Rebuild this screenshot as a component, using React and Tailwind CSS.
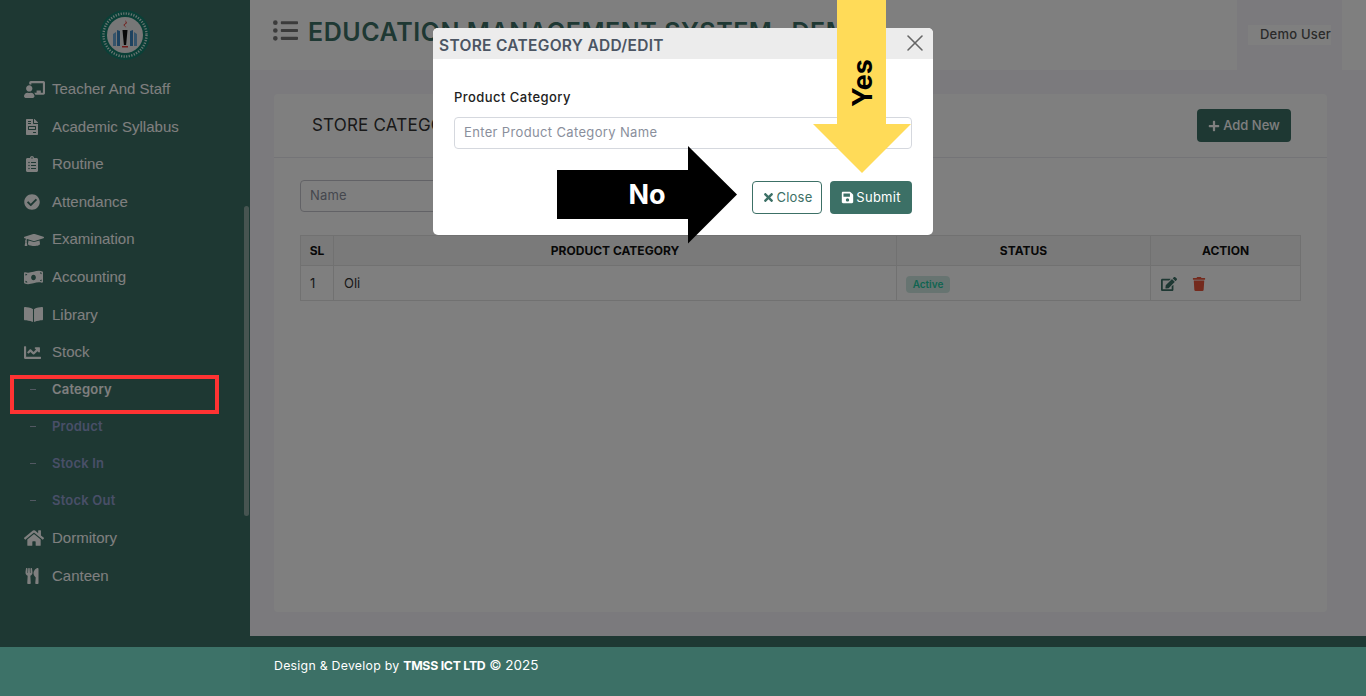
import React from 'react'
import {
  FaChalkboardTeacher,
  FaFileInvoice,
  FaClipboardList,
  FaCheckCircle,
  FaGraduationCap,
  FaMoneyBillWave,
  FaBookOpen,
  FaChartLine,
  FaHome,
  FaUtensils,
  FaEdit,
  FaTrash,
  FaListUl,
  FaSave,
  FaPlus,
  FaTimes
} from 'react-icons/fa'
import { X } from 'lucide-react'

const SANS = "font-['Inter','Liberation_Sans',sans-serif]"

const MENU_TOP = [
  { label: 'Teacher And Staff', icon: FaChalkboardTeacher, size: 21 },
  { label: 'Academic Syllabus', icon: FaFileInvoice, size: 16 },
  { label: 'Routine', icon: FaClipboardList, size: 16 },
  { label: 'Attendance', icon: FaCheckCircle, size: 16 },
  { label: 'Examination', icon: FaGraduationCap, size: 20 },
  { label: 'Accounting', icon: FaMoneyBillWave, size: 19 },
  { label: 'Library', icon: FaBookOpen, size: 19 },
  { label: 'Stock', icon: FaChartLine, size: 17 }
]

const SUB_MENU = ['Category', 'Product', 'Stock In', 'Stock Out']

const MENU_BOTTOM = [
  { label: 'Dormitory', icon: FaHome, size: 20 },
  { label: 'Canteen', icon: FaUtensils, size: 16 }
]

function Logo() {
  return (
    <svg width="50" height="50" viewBox="0 0 50 50">
      <circle cx="25" cy="25" r="25" fill="#14806f" />
      <circle cx="25" cy="25" r="21.5" fill="none" stroke="#d7ebe6" strokeWidth="2.4" strokeDasharray="1.2 1.4" />
      <circle cx="25" cy="25" r="18" fill="#efefef" />
      <path d="M13 24l3-2v14h-3z" fill="#6aa9d6" />
      <path d="M17 20l3 1v15h-3z" fill="#3c86c0" />
      <path d="M30 21l3-1v16h-3z" fill="#3c86c0" />
      <path d="M34 22l3 2v12h-3z" fill="#6aa9d6" />
      <path d="M22.5 20h5l-1.4 15h-2.2z" fill="#111" />
      <path d="M25.5 10l1.5 3-2.5 2 2 3-3.2-3 2.4-2z" fill="#e53935" />
      <rect x="22" y="36" width="6" height="1.5" fill="#e53935" />
    </svg>
  )
}

function MenuItem({ item }) {
  const Icon = item.icon
  return (
    <div className="flex h-[37.6px] items-center pl-6">
      <span className="flex w-7 shrink-0 items-center">
        <Icon size={item.size} className="text-white" />
      </span>
      <span className="font-['Liberation_Sans',Arial,sans-serif] text-[15px] text-white">{item.label}</span>
    </div>
  )
}

function Sidebar() {
  return (
    <aside className="relative h-[647px] w-[250px] shrink-0 bg-[#3c7066]">
      <div className="flex justify-center pt-[10px] pb-[10.5px]">
        <Logo />
      </div>
      <div>
        {MENU_TOP.map(item => (
          <MenuItem key={item.label} item={item} />
        ))}
        <div className="mb-[0.4px]">
          {SUB_MENU.map((label, i) => (
            <div key={label} className="flex h-[37px] items-center pl-[30px]">
              <span className="mr-[16px] h-px w-[6px] bg-[#a5b0c4]" />
              <span className={`${SANS} text-[13px] font-semibold tracking-[0.2px] ${i === 0 ? 'text-white' : 'text-[#929fd0]'}`}>
                {label}
              </span>
            </div>
          ))}
        </div>
        {MENU_BOTTOM.map(item => (
          <MenuItem key={item.label} item={item} />
        ))}
      </div>
      {/* scrollbar */}
      <div className="absolute top-[206px] right-px h-[310px] w-[5px] rounded-full bg-[#8ea9a3]" />
    </aside>
  )
}

function Header() {
  return (
    <header className="flex h-[70px] items-stretch bg-white">
      <div className="flex flex-1 items-start gap-[10px] pt-[17px] pl-[23px]">
        <FaListUl size={25} className="mt-px text-[#777]" />
        <h1 className={`${SANS} whitespace-nowrap text-[25px] leading-[30px] font-semibold tracking-[0.55px] text-[#3c7066]`}>
          EDUCATION MANAGEMENT SYSTEM- DEMO
        </h1>
      </div>
      <div className="flex w-[105px] items-center justify-center bg-[#f6f5fa]">
        <span className={`${SANS} flex h-5 w-[83px] items-center justify-end bg-white text-[13px] font-medium tracking-[0.2px] text-[#555]`}>
          Demo User
        </span>
      </div>
      <div className="w-6" />
    </header>
  )
}

function StoreCard() {
  return (
    <section className={`${SANS} flex h-[518px] flex-col rounded bg-white`}>
      <div className="flex h-[64px] items-center justify-between border-b border-[#e9e9ee] pr-9 pl-[38px]">
        <h2 className="text-[17px] tracking-[0.2px] text-[#333]">STORE CATEGORY LIST</h2>
        <button className="flex h-[33px] w-[94px] items-center justify-center gap-[3px] rounded bg-[#3c7066] text-[13px] font-medium text-white">
          <FaPlus size={12} />
          Add New
        </button>
      </div>
      <div className="px-[26px] pt-[22px]">
        <div className="flex h-8 w-[400px] items-center rounded border border-[#c5c5cc] px-[9px] text-[13px] tracking-[0.2px] text-[#8a8f9c]">
          Name
        </div>
        <table className="mt-[23px] w-[1001px] table-fixed border-collapse text-[12px] text-[#333]">
          <thead>
            <tr className="h-[30px] bg-[#f5f5f5] font-bold text-[#111]">
              <th className="w-[33px] border border-[#e3e3e3] font-bold">SL</th>
              <th className="w-[563px] border border-[#e3e3e3] font-bold">PRODUCT CATEGORY</th>
              <th className="w-[254px] border border-[#e3e3e3] font-bold">STATUS</th>
              <th className="border border-[#e3e3e3] font-bold">ACTION</th>
            </tr>
          </thead>
          <tbody>
            <tr className="h-[35px]">
              <td className="border border-[#e3e3e3] pt-px pl-[9px] text-[13px]">1</td>
              <td className="border border-[#e3e3e3] pt-px pl-[10px] text-[13px]">Oli</td>
              <td className="border border-[#e3e3e3] pt-px pl-[9px]">
                <span className="inline-flex h-[17px] w-11 items-center justify-center rounded bg-[#cfe9e3] text-[10px] font-semibold text-[#1fc9a3]">
                  Active
                </span>
              </td>
              <td className="border border-[#e3e3e3] pt-px pl-[10px]">
                <div className="flex items-center gap-[15px]">
                  <FaEdit size={16} className="text-[#3c7066]" />
                  <FaTrash size={14} className="text-[#e8553a]" />
                </div>
              </td>
            </tr>
          </tbody>
        </table>
      </div>
    </section>
  )
}

function Modal() {
  return (
    <div className={`${SANS} h-[207px] w-[500px] overflow-hidden rounded-[5px] bg-white`}>
      <div className="flex h-[31px] justify-between bg-[#ececec] pr-1 pl-[6px]">
        <span className="pt-[6px] text-[15.5px] leading-[24px] font-semibold tracking-[0.3px] text-[#4b5563]">STORE CATEGORY ADD/EDIT</span>
        <X size={28} strokeWidth={1.3} className="mt-px text-[#666]" />
      </div>
      <div className="px-[21px] pt-[28px]">
        <label className="block text-[13px] leading-[20px] font-medium tracking-[0.45px] text-[#222]">Product Category</label>
        <div className="mt-[10px] flex h-8 items-center rounded border border-[#d5d8de] px-[9px] text-[13px] tracking-[0.35px] text-[#8a8f9c]">
          Enter Product Category Name
        </div>
        <div className="mt-8 flex justify-end gap-2">
          <button className="flex h-[33px] w-[70px] items-center justify-center gap-[2px] rounded border border-[#3c7066] text-[13px] tracking-[0.2px] text-[#3c7066]">
            <FaTimes size={13} />
            Close
          </button>
          <button className="flex h-[33px] w-[82px] items-center justify-center gap-[2px] rounded bg-[#3c7066] text-[13px] tracking-[0.25px] text-white">
            <FaSave size={13} />
            Submit
          </button>
        </div>
      </div>
    </div>
  )
}

function YesArrow() {
  return (
    <div className="absolute top-0 left-[813px] h-[174px] w-[98px]">
      <svg width="98" height="174" viewBox="0 0 98 174">
        <path d="M24 0h49v124h25l-49 49-49-49h24z" fill="#ffdb58" />
      </svg>
      <span className="absolute top-[83px] left-[50px] -translate-x-1/2 -translate-y-1/2 -rotate-90 font-['Inter',sans-serif] text-[27px] font-bold text-black">
        Yes
      </span>
    </div>
  )
}

function NoArrow() {
  return (
    <div className="absolute top-[146px] left-[557px] h-[98px] w-[180px]">
      <svg width="180" height="98" viewBox="0 0 180 98">
        <path d="M0 24h131V0l49 48.5-49 49V73H0z" fill="#000" />
      </svg>
      <span className="absolute top-[49px] left-[90px] -translate-x-1/2 -translate-y-1/2 font-['Inter',sans-serif] text-[27px] font-bold text-white">
        No
      </span>
    </div>
  )
}

export default function App() {
  return (
    <div className="relative h-[696px] w-full overflow-hidden bg-[#f6f5fa]">
      <div className="flex h-[647px]">
        <Sidebar />
        <main className="flex min-w-0 flex-1 flex-col">
          <Header />
          <div className="h-[566px] pt-6 pr-[39px] pl-6">
            <StoreCard />
          </div>
          <div className="h-[11px] bg-[#3c7066]" />
        </main>
      </div>

      {/* backdrop + modal */}
      <div className="absolute inset-0 flex justify-center bg-black/50 pt-7">
        <Modal />
      </div>

      {/* footer sits above the backdrop */}
      <footer className={`${SANS} relative z-10 flex h-[49px] bg-[#3c7066]`}>
        <div className="w-[250px] bg-[#3d7268]" />
        <p className="pt-[8px] pl-6 text-[12.3px] tracking-[0.27px] text-white">
          Design & Develop by <b className="font-bold tracking-[-0.25px]">TMSS ICT LTD</b> <span className="text-[13.5px] tracking-normal">© 2025</span>
        </p>
      </footer>

      {/* annotations */}
      <YesArrow />
      <NoArrow />
      <div className="absolute top-[375px] left-[10px] h-[39px] w-[209px] border-[4px] border-[#ff3333]" />
    </div>
  )
}
